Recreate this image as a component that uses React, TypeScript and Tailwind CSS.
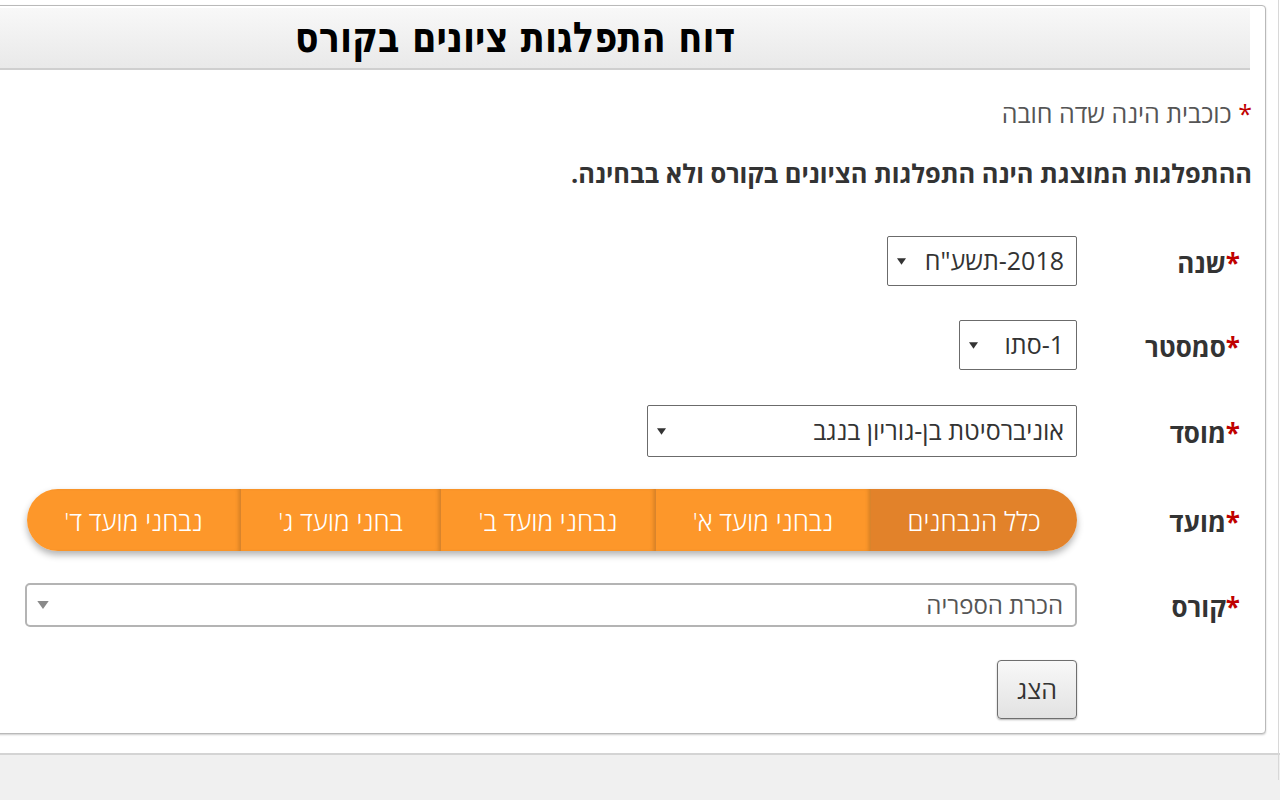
import React from "react";

const Arrow = ({ light = false }: { light?: boolean }) => (
  <svg width={light ? 12 : 9} height={light ? 8 : 7} viewBox="0 0 10 7" className="shrink-0">
    <path d="M0 0 L10 0 L5 7 Z" fill={light ? "#8a8a8a" : "#333"} />
  </svg>
);

const Label = ({ text }: { text: string }) => (
  <div className="w-[175px] shrink-0 text-[26px] font-bold text-[#333] leading-none pr-[12px] pt-[4px]">
    <span className="text-[#c00000]">*</span>
    {text}
  </div>
);

const Select = ({ value, w, h }: { value: string; w: string; h: string }) => (
  <div
    className={`${w} ${h} border-[1.5px] border-[#6b6b6b] rounded-[2px] bg-white flex items-center justify-between pr-[12px] pl-[9px] text-[25px] text-[#333]`}
  >
    <span>{value}</span>
    <Arrow />
  </div>
);

export default function App() {
  const segs = ["כלל הנבחנים", "נבחני מועד א'", "נבחני מועד ב'", "בחני מועד ג'", "נבחני מועד ד'"];
  const widths = ["w-[206px]", "w-[215px]", "w-[215px]", "w-[200px]", "w-[214px]"];
  return (
    <div
      dir="rtl"
      className="w-[1280px] h-[800px] overflow-hidden bg-[#f0f0f0] relative"
      style={{ fontFamily: '"Open Sans", "Noto Sans", sans-serif' }}
    >
      <div className="h-[755px] bg-white border-b-2 border-[#d4d4d4] w-[1280px] pt-[5px] pr-[14px]">
        <div className="ml-[-20px] h-[729px] border border-[#b9b9b9] rounded-[4px] shadow-[0_1px_2px_rgba(0,0,0,0.2)] bg-white">
          {/* header */}
          <div className="mt-[2px] mr-[15px] h-[62px] bg-gradient-to-b from-[#f8f8f8] to-[#e9e9e9] border-b-2 border-[#cfcfcf] flex items-center pr-[515px]">
            <h1
              className="text-[42px] font-bold text-black leading-none scale-x-[0.935] origin-right whitespace-nowrap"
              style={{ fontFamily: '"DejaVu Sans Condensed", "DejaVu Sans", sans-serif' }}
            >
              דוח התפלגות ציונים בקורס
            </h1>
          </div>

          <div className="pr-[13px]">
            <div className="pt-[28px] text-[25px] text-[#555] leading-[30px]">
              <span className="text-[#c00000]">*</span> כוכבית הינה שדה חובה
            </div>
            <div className="pt-[30px] text-[25.4px] font-bold text-[#333] leading-[30px]">
              ההתפלגות המוצגת הינה התפלגות הציונים בקורס ולא בבחינה.
            </div>

            {/* rows */}
            <div className="mt-[48px] flex items-center h-[50px]">
              <Label text="שנה" />
              <Select value={'2018-תשע"ח'} w="w-[190px]" h="h-[50px]" />
            </div>
            <div className="mt-[34px] flex items-center h-[50px]">
              <Label text="סמסטר" />
              <Select value="1-סתו" w="w-[118px]" h="h-[50px]" />
            </div>
            <div className="mt-[35px] flex items-center h-[52px]">
              <Label text="מוסד" />
              <Select value="אוניברסיטת בן-גוריון בנגב" w="w-[430px]" h="h-[52px]" />
            </div>
            <div className="mt-[32px] flex items-center h-[62px]">
              <Label text="מועד" />
              <div className="flex rounded-full overflow-hidden shadow-[0_4px_7px_rgba(0,0,0,0.3)] h-[62px]">
                {segs.map((s, i) => (
                  <div
                    key={s}
                    className={`${widths[i]} h-full flex items-center justify-center pt-[2px] text-white text-[26px] font-light ${
                      i === 0
                        ? "bg-[#e2822a]"
                        : "bg-[#fd972a] border-r border-[#d9842c] shadow-[inset_-3px_0_4px_-2px_rgba(0,0,0,0.18)]"
                    }`}
                  >
                    {s}
                  </div>
                ))}
              </div>
            </div>
            <div className="mt-[32px] flex items-center h-[44px]">
              <Label text="קורס" />
              <div className="w-[1052px] h-[44px] border-2 border-[#b4b4b4] rounded-[5px] bg-white flex items-center justify-between pr-[12px] pl-[10px] text-[24px] text-[#555]">
                <span>הכרת הספריה</span>
                <Arrow light />
              </div>
            </div>
            <div className="mt-[33px] flex">
              <div className="w-[175px] shrink-0" />
              <button className="w-[80px] h-[59px] border border-[#6e6e6e] rounded-[4px] bg-gradient-to-b from-[#f8f8f8] to-[#e2e2e2] shadow-[0_1px_2px_rgba(0,0,0,0.3)] text-[25px] text-[#333]">
                הצג
              </button>
            </div>
          </div>
        </div>
      </div>
      <div className="absolute right-[1px] top-0 w-px h-[780px] bg-[#d8d8d8]" />
    </div>
  );
}
